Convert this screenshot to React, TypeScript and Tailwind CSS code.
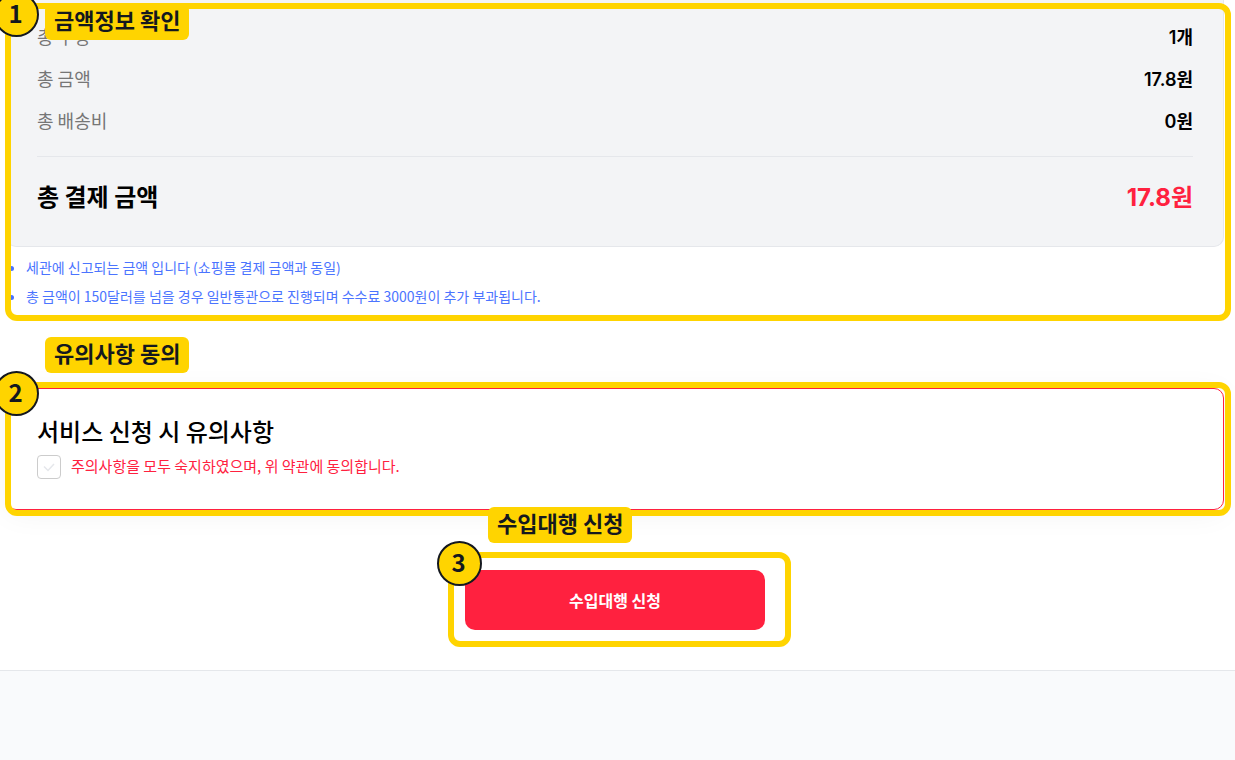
import { ReactNode, useState } from "react";

type CalloutProps = {
  step: number;
  label: string;
  frameClass: string;
  labelClass: string;
};

function Callout({ step, label, frameClass, labelClass }: CalloutProps) {
  return (
    <div
      className={`pointer-events-none absolute z-10 rounded-xl border-6 border-[#ffd400] ${frameClass}`}
    >
      <span
        className={`absolute left-[34px] flex h-9 items-center rounded-md bg-[#ffd400] px-[9px] pb-[7px] text-[22px] leading-8 font-bold whitespace-nowrap text-[#14181f] ${labelClass}`}
      >
        {label}
      </span>
      <span className="absolute -top-[17px] -left-[17px] flex size-[45px] items-center justify-center rounded-full border-2 border-[#14181f] bg-[#ffd400] pr-0.5 pb-1 text-2xl leading-8 font-bold text-[#14181f]">
        {step}
      </span>
    </div>
  );
}

function SummaryRow({ name, children }: { name: string; children: ReactNode }) {
  return (
    <div className="flex h-[42px] items-baseline justify-between text-lg leading-[42px]">
      <dt className="text-[#767676]">{name}</dt>
      <dd className="font-['Inter','Noto_Sans_CJK_KR',sans-serif] font-semibold text-black">
        {children}
      </dd>
    </div>
  );
}

export default function App() {
  const [agreed, setAgreed] = useState(false);

  return (
    <div className="flex min-h-screen flex-col overflow-x-hidden bg-white font-['Noto_Sans_CJK_KR',sans-serif]">
      <main className="flex flex-col pr-[11px] pb-10 pl-1.5">
        <section className="relative pb-1">
          <dl className="rounded-b-[10px] border border-t-0 border-[#e5e7eb] bg-[#f3f4f6] px-[30px] pt-[15px]">
            <SummaryRow name="총 수량">1개</SummaryRow>
            <SummaryRow name="총 금액">17.8원</SummaryRow>
            <SummaryRow name="총 배송비">0원</SummaryRow>
            <div className="mt-[15px] flex h-[90px] items-baseline justify-between border-t border-[#e5e7eb] text-2xl leading-[78px]">
              <dt className="font-bold text-black">총 결제 금액</dt>
              <dd className="font-['Inter','Noto_Sans_CJK_KR',sans-serif] font-bold text-[#ff213f]">
                17.8원
              </dd>
            </div>
          </dl>
          <ul className="list-disc pt-1.5 pl-5 text-sm leading-[29px] text-[#4b74ff]">
            <li>세관에 신고되는 금액 입니다 (쇼핑몰 결제 금액과 동일)</li>
            <li>
              총 금액이 150달러를 넘을 경우 일반통관으로 진행되며 수수료 3000원이
              추가 부과됩니다.
            </li>
          </ul>
          <Callout
            step={1}
            label="금액정보 확인"
            frameClass="top-[3px] -right-[7px] -bottom-1.5 -left-px"
            labelClass="-top-[5px]"
          />
        </section>

        <section className="relative mt-[73px] rounded-[10px] border border-[#ff213f] bg-white px-[30px] pt-6 pb-[30px] shadow-[0_4px_30px_rgba(0,0,0,0.05)]">
          <h2 className="text-2xl leading-9 font-medium text-black">
            서비스 신청 시 유의사항
          </h2>
          <label className="mt-1.5 flex h-6 items-center gap-2.5 text-[15px] leading-6 text-[#ff213f]">
            <span className="relative flex size-6">
              <input
                type="checkbox"
                checked={agreed}
                onChange={(e) => setAgreed(e.target.checked)}
                className="peer size-6 appearance-none rounded-sm border border-[#cccccc] bg-white checked:border-[#ff213f] checked:bg-[#ff213f]"
              />
              <svg
                viewBox="0 0 24 24"
                fill="none"
                stroke="currentColor"
                strokeWidth="1.5"
                className="pointer-events-none absolute inset-0 size-6 text-[#e5e7eb] peer-checked:text-white"
              >
                <path d="M7 11.5l4 4 6-6.5" />
              </svg>
            </span>
            <span className="pb-0.5">
              주의사항을 모두 숙지하였으며, 위 약관에 동의합니다.
            </span>
          </label>
          <Callout
            step={2}
            label="유의사항 동의"
            frameClass="-top-[7px] -right-2 -bottom-[7px] -left-0.5"
            labelClass="-top-[51px]"
          />
        </section>

        <div className="relative mt-[60px] self-center">
          <button
            type="button"
            className="h-[60px] w-[300px] rounded-[10px] bg-[#ff213f] text-base font-bold text-white"
          >
            수입대행 신청
          </button>
          <Callout
            step={3}
            label="수입대행 신청"
            frameClass="-top-[18px] -right-[26px] -bottom-[17px] -left-[17px]"
            labelClass="-top-[51px]"
          />
        </div>
      </main>
      <footer className="grow border-t border-[#e5e7eb] bg-[#f9fafc]" />
    </div>
  );
}
